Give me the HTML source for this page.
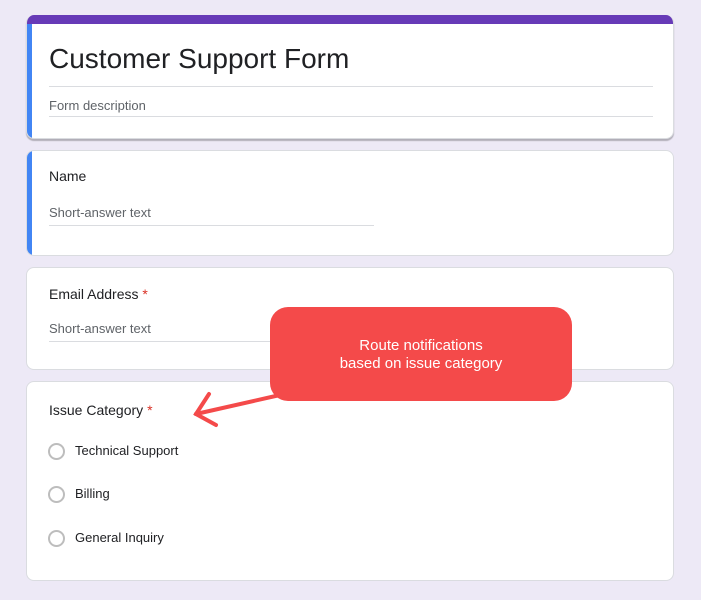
<!DOCTYPE html>
<html><head><style>
body{margin:0;width:701px;height:600px;background:#ede9f6;font-family:"Liberation Sans",Arial,sans-serif;position:relative;overflow:hidden}
.card{position:absolute;left:26px;width:648px;background:#fff;border:1px solid #dadce0;border-radius:8px;box-sizing:border-box;overflow:hidden}
.bl{position:absolute;left:0;top:0;bottom:0;width:5px;background:#4285f4}
.t{position:absolute;left:22px;color:#202124}
.ph{position:absolute;left:22px;font-size:13px;color:#5f6368}
.ln{position:absolute;left:22px;height:1px;background:#dadce0}
.req{color:#d93025}
.rad{position:absolute;left:21px;width:17px;height:17px;border:2px solid #bdbdbd;border-radius:50%;box-sizing:border-box}
.rl{position:absolute;left:48px;font-size:13px;color:#202124}
</style></head><body>
<div class="card" style="top:15px;height:124px;border-top:none;box-shadow:0 2px 1px rgba(0,0,0,.25)">
 <div style="position:absolute;left:0;right:0;top:0;height:9px;background:#673ab7"></div>
 <div class="bl" style="top:9px"></div>
 <div class="t" style="top:28px;font-size:28px">Customer Support Form</div>
 <div class="ln" style="top:71px;width:604px"></div>
 <div class="ph" style="top:83px">Form description</div>
 <div class="ln" style="top:101px;width:604px"></div>
</div>
<div class="card" style="top:150px;height:106px">
 <div class="bl"></div>
 <div class="t" style="top:17px;font-size:14px">Name</div>
 <div class="ph" style="top:54px">Short-answer text</div>
 <div class="ln" style="top:74px;width:325px"></div>
</div>
<div class="card" style="top:267px;height:103px">
 <div class="t" style="top:18px;font-size:14px">Email Address <span class="req">*</span></div>
 <div class="ph" style="top:53px">Short-answer text</div>
 <div class="ln" style="top:73px;width:325px"></div>
</div>
<div class="card" style="top:381px;height:200px">
 <div class="t" style="top:20px;font-size:14px">Issue Category <span class="req">*</span></div>
 <div class="rad" style="top:61px"></div><div class="rl" style="top:61px">Technical Support</div>
 <div class="rad" style="top:104px"></div><div class="rl" style="top:104px">Billing</div>
 <div class="rad" style="top:148px"></div><div class="rl" style="top:148px">General Inquiry</div>
</div>
<svg style="position:absolute;left:0;top:0" width="701" height="600">
 <g stroke="#f44a4a" stroke-width="4" stroke-linecap="round" fill="none">
  <line x1="280" y1="395" x2="196" y2="414"/>
  <polyline points="209,394 196,414 216,425"/>
 </g>
</svg>
<div style="position:absolute;left:270px;top:307px;width:302px;height:94px;background:#f44a4a;border-radius:18px;color:#fff;font-size:15px;text-align:center;line-height:18px;box-sizing:border-box;padding-top:30px">Route notifications<br>based on issue category</div>
</body></html>
